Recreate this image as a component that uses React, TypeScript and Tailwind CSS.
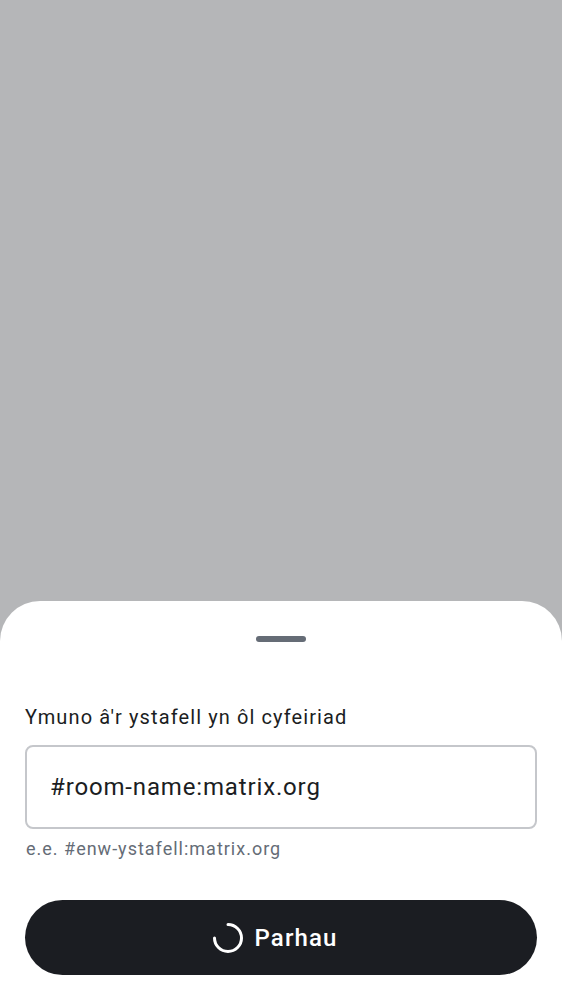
import React from "react";

const Spinner: React.FC = () => (
  <svg width="32" height="32" viewBox="0 0 32 32" fill="none" className="shrink-0">
    {/* arc with a gap in the top-left quadrant */}
    <path
      d="M16 2.5 A13.5 13.5 0 1 1 2.5 16"
      stroke="white"
      strokeWidth="3"
      strokeLinecap="round"
    />
  </svg>
);

const App: React.FC = () => {
  return (
    <div
      className="h-[1000px] w-full flex flex-col bg-[#b5b6b8]"
      style={{ fontFamily: "Roboto, 'Noto Sans', sans-serif" }}
    >
      <div className="flex-1" />

      {/* Bottom sheet */}
      <div className="bg-white rounded-t-[40px] px-[25px] pt-[35px] pb-[25px] flex flex-col">
        {/* Drag handle */}
        <div className="self-center w-[50px] h-[6px] rounded-full bg-[#656c76]" />

        <label className="mt-[61px] text-[20px] leading-[28px] tracking-[1.1px] text-[#1b1d22]">
          Ymuno â'r ystafell yn ôl cyfeiriad
        </label>

        <div className="mt-[14px] h-[84px] rounded-[8px] border-2 border-[#c5c7cb] flex items-center px-[23px]">
          <span className="text-[24px] tracking-[0.85px] text-[#1b1d22]">#room-name:matrix.org</span>
        </div>

        <p className="mt-[8px] ml-[1px] text-[18px] leading-[24px] tracking-[1px] text-[#656c76]">
          e.e. #enw-ystafell:matrix.org
        </p>

        <button className="mt-[39px] h-[75px] w-full rounded-full bg-[#1b1d22] flex items-center justify-center gap-[11px] pr-[13px]">
          <Spinner />
          <span className="text-[24px] font-medium tracking-[1.1px] text-white">Parhau</span>
        </button>
      </div>
    </div>
  );
};

export default App;
